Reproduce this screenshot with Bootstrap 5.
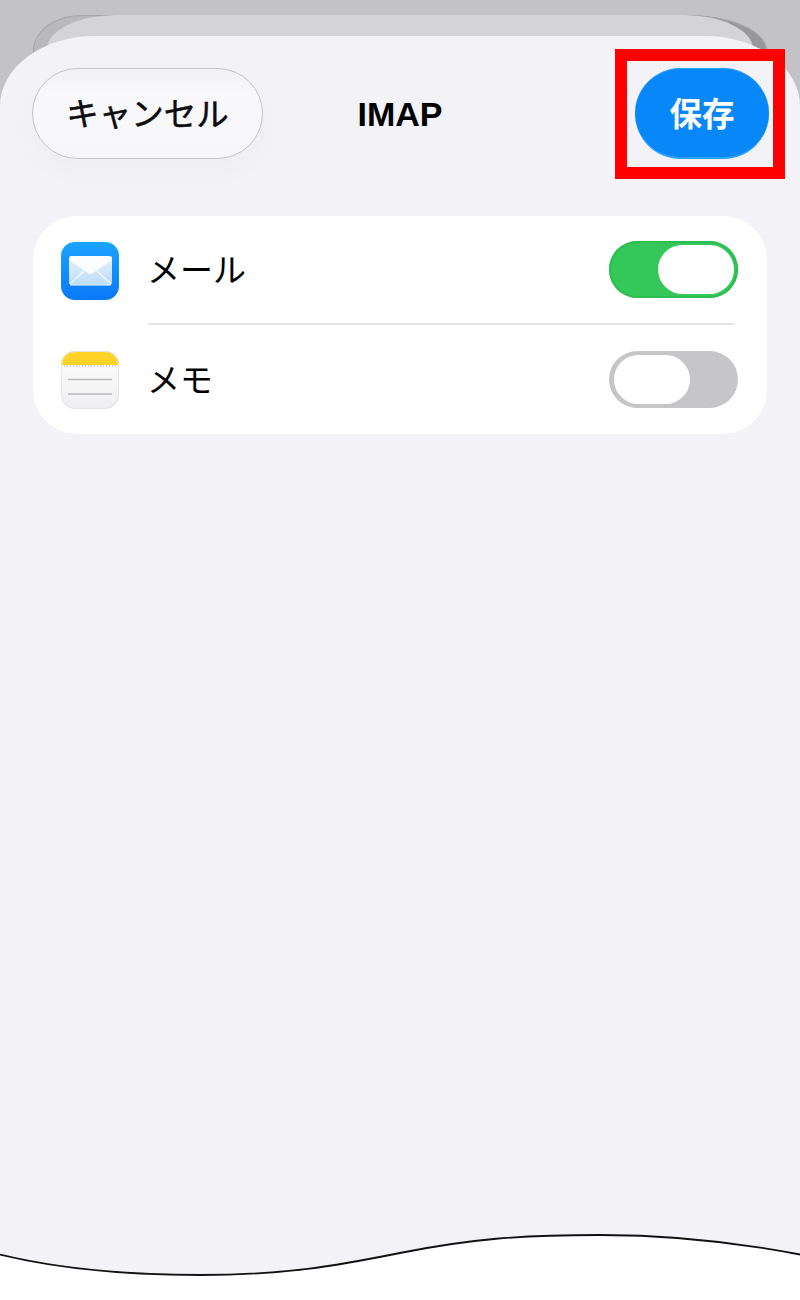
<!DOCTYPE html>
<html lang="ja">
<head>
<meta charset="utf-8">
<title>IMAP</title>
<link href="https://cdn.jsdelivr.net/npm/bootstrap@5.3.0/dist/css/bootstrap.min.css" rel="stylesheet">
<style>
html,body{margin:0;height:100%;}
body{background:#c3c2c7;font-family:"Liberation Sans","Noto Sans CJK JP",sans-serif;color:#000;overflow:hidden;}
.stage{position:relative;width:800px;height:1300px;overflow:hidden;padding-top:36px;}
.back-a{position:absolute;left:33px;right:33px;top:15px;height:120px;background:linear-gradient(90deg,#b9b9bc 0,#b9b9bc 60%,#98989c 90%);border-radius:48px 80px 0 0/36px 36px 0 0;box-shadow:inset 0 0 0 1px #a6a6aa;}
.back-b{position:absolute;left:47px;right:47px;top:15px;height:120px;background:#d3d3d8;border-radius:70px 70px 0 0/34px 34px 0 0;}
.sheet{position:relative;height:1264px;background:#f2f2f7;border-radius:95px 95px 0 0/70px 70px 0 0;padding:32px 31px 0 32px;}
.head{display:grid;grid-template-columns:1fr auto 1fr;align-items:center;height:91px;}
.btn-cancel,.btn-save{height:91px;border-radius:46px;line-height:1;padding:0 0 2px;font-family:"Noto Sans CJK JP",sans-serif;}
.btn-cancel{width:231px;justify-self:start;font-size:32.500px;font-weight:400;-webkit-text-stroke:.5px #0c0c0e;color:#0c0c0e;background:linear-gradient(#f2f2f6,#f9f9fb 30%,#f7f7fa);border:1px solid #c4c4c8;box-shadow:0 14px 30px rgba(0,0,0,.02);}
.btn-cancel:hover{color:#0c0c0e;background:#f7f7fa;border-color:#c4c4c8;}
.btn-save{width:134px;justify-self:end;font-size:32.500px;font-weight:700;color:#fff;background:#0887f9;border:0;border-top:1px solid #2a9bff;border-bottom:2px solid #2aa0ff;}
.btn-save:hover{color:#fff;background:#0887f9;}
.title{font-size:34px;font-weight:700;line-height:1;margin-left:-1px;}
.panel{margin:57px 2px 0 1px;background:#fff;border-radius:44px;height:218px;padding-left:28px;padding-right:33px;}
.rowline{height:109px;}
.app-icon{width:58px;height:58px;flex:none;display:block;}
.rowline:first-child .rowinner{border-bottom:2px solid #e4e4e6;}
.rowinner{flex:1;height:100%;display:flex;align-items:center;margin-left:29px;font-size:33px;font-family:"Noto Sans CJK JP",sans-serif;}
.lbl{flex:1;margin-top:-1px;margin-left:-1px;}
.toggle{position:relative;display:block;width:129px;height:57px;border-radius:29px;margin-right:-4px;}
.toggle.on{background:#34c759;box-shadow:inset 0 0 0 2px #2dbd50;}
.toggle.off{background:#c6c6c8;}
.knob{position:absolute;top:4px;width:76px;height:49px;background:#fff;border-radius:25px;}
.on .knob{right:4px;}
.off .knob{left:5px;}
.mark-red{position:absolute;left:615px;top:49px;width:170px;height:130px;border:12px solid #f00;}
.wave{position:absolute;left:0;top:1210px;width:800px;height:90px;display:block;}
</style>
</head>
<body>
<div class="stage">
  <div class="back-a"></div>
  <div class="back-b"></div>
  <div class="sheet">
    <div class="head">
      <button type="button" class="btn btn-cancel">キャンセル</button>
      <div class="title">IMAP</div>
      <button type="button" class="btn btn-save">保存</button>
    </div>
    <div class="panel d-flex flex-column">
      <div class="rowline d-flex align-items-center">
        <svg class="app-icon" viewBox="0 0 58 58" aria-hidden="true">
          <defs>
            <linearGradient id="mg" x1="0" y1="0" x2="0" y2="1"><stop offset="0" stop-color="#1aa4ff"/><stop offset="1" stop-color="#0a78f8"/></linearGradient>
            <linearGradient id="eg" x1="0" y1="0" x2="0" y2="1"><stop offset="0" stop-color="#e6f2fd"/><stop offset="1" stop-color="#bcdcf8"/></linearGradient>
          </defs>
          <rect width="58" height="58" rx="14" fill="url(#mg)"/>
          <rect x="8" y="14" width="43" height="29" rx="3" fill="url(#eg)"/>
          <path d="M9 42 L23 29 M50 42 L36 29" stroke="#f2f8fe" stroke-width="1.300" fill="none"/>
          <path d="M8 17A3 3 0 0 1 11 14H48A3 3 0 0 1 51 17V18L32 31Q29.500 32.500 27 31L8 18Z" fill="#fbfdff"/>
          <path d="M9 43H50" stroke="#f2f8fe" stroke-width="1"/>
        </svg>
        <div class="rowinner">
          <span class="lbl">メール</span>
          <span class="toggle on"><span class="knob"></span></span>
        </div>
      </div>
      <div class="rowline d-flex align-items-center">
        <svg class="app-icon" viewBox="0 0 58 58" aria-hidden="true">
          <defs>
            <linearGradient id="ng" x1="0" y1="0" x2="0" y2="1"><stop offset="0" stop-color="#fdfdfd"/><stop offset="1" stop-color="#efeff1"/></linearGradient>
            <clipPath id="nc"><rect width="58" height="58" rx="14"/></clipPath>
          </defs>
          <g clip-path="url(#nc)">
            <rect width="58" height="58" fill="url(#ng)"/>
            <rect width="58" height="14" fill="#ffd426"/>
            <path d="M0 15 H58" stroke="#a8a49a" stroke-width="1" stroke-dasharray="1 2"/>
            <path d="M7 28.500H51M7 43H51" stroke="#b9b9b9" stroke-width="1.400"/>
          </g>
          <rect x=".5" y=".5" width="57" height="57" rx="13.500" fill="none" stroke="#e4e4e6"/>
        </svg>
        <div class="rowinner">
          <span class="lbl">メモ</span>
          <span class="toggle off"><span class="knob"></span></span>
        </div>
      </div>
    </div>
  </div>
  <div class="mark-red"></div>
  <svg class="wave" viewBox="0 0 800 90" aria-hidden="true">
    <path d="M0 44.500C60 59 130 65 200 65C285 65 335 56 400 43C470 29 520 25 600 25C670 25 730 31 800 44.500V90H0Z" fill="#fff"/>
    <path d="M0 44.500C60 59 130 65 200 65C285 65 335 56 400 43C470 29 520 25 600 25C670 25 730 31 800 44.500" fill="none" stroke="#111" stroke-width="1.800"/>
  </svg>
</div>
<script src="https://cdn.jsdelivr.net/npm/bootstrap@5.3.0/dist/js/bootstrap.bundle.min.js"></script>
</body>
</html>
